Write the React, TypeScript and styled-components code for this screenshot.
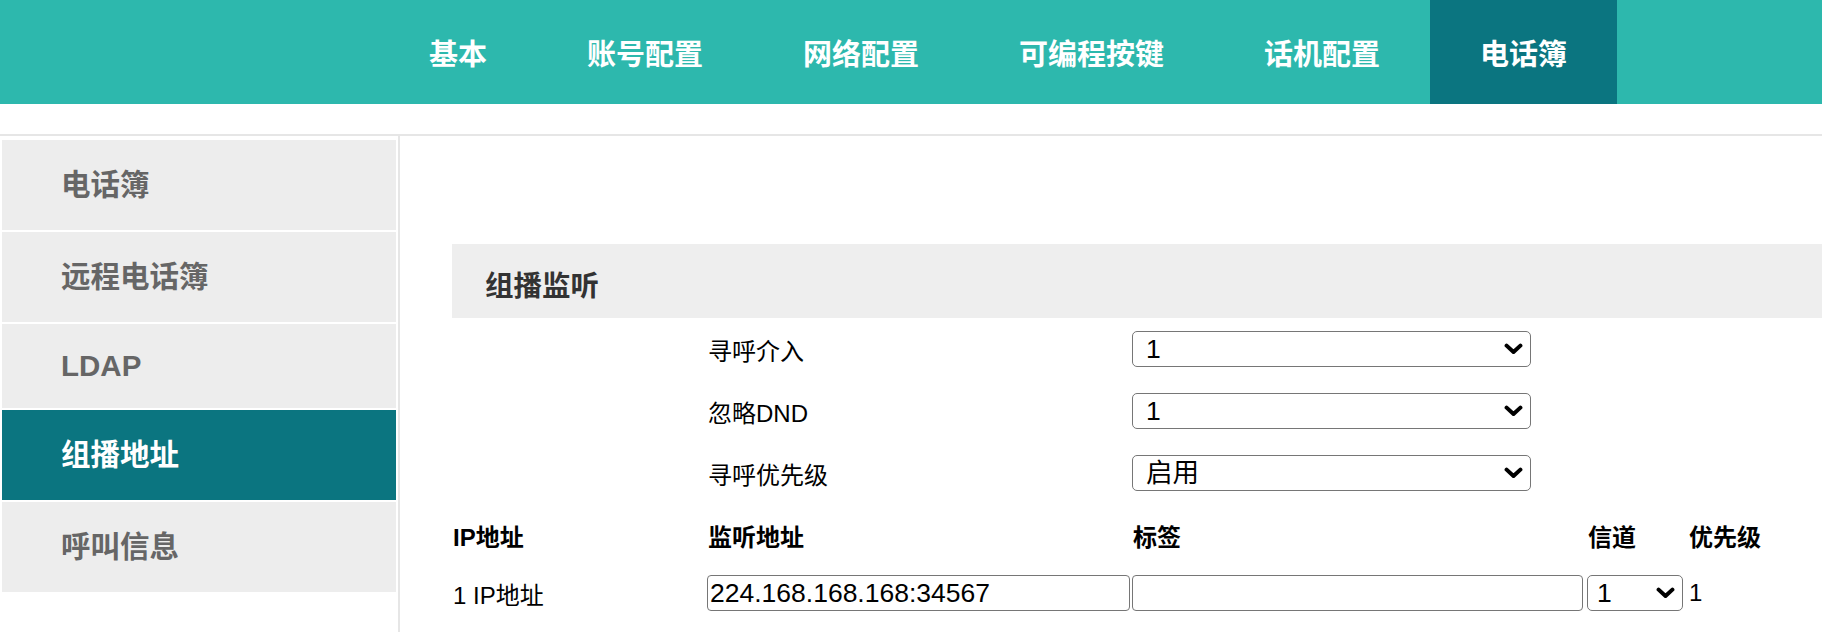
import React from "react";
import styled, { createGlobalStyle } from "styled-components";

const GlobalStyle = createGlobalStyle`
  html, body {
    margin: 0;
    padding: 0;
    background: #ffffff;
  }
  body {
    font-family: "Liberation Sans", "Noto Sans CJK SC", sans-serif;
    color: #000;
  }
  * { box-sizing: border-box; }
`;

const Page = styled.div`
  display: flex;
  flex-direction: column;
  min-height: 632px;
`;

const TopBar = styled.header`
  height: 104px;
  background: #2db8ad;
  display: flex;
  padding-left: 379px;
`;

const NavItem = styled.div<{ $active?: boolean }>`
  display: flex;
  align-items: center;
  padding: 0 50px;
  height: 100%;
  color: #ffffff;
  font-size: 29px;
  font-weight: 700;
  background: ${(p) => (p.$active ? "#0b7580" : "transparent")};
  white-space: nowrap;
`;

const Main = styled.div`
  margin-top: 30px;
  border-top: 2px solid #e6e6e6;
  display: grid;
  grid-template-columns: 400px 1fr;
  flex: 1;
`;

const Sidebar = styled.nav`
  border-right: 2px solid #e6e6e6;
  padding: 4px 2px;
  display: flex;
  flex-direction: column;
  gap: 2px;
`;

const SideItem = styled.div<{ $active?: boolean; $latin?: boolean }>`
  background: ${(p) => (p.$active ? "#0b7580" : "#ededed")};
  color: ${(p) => (p.$active ? "#ffffff" : "#666666")};
  font-size: 29.5px;
  font-weight: 700;
  line-height: ${(p) => (p.$latin ? "34px" : "40px")};
  padding: 25px 0 25px 59px;
`;

const Content = styled.section`
  padding: 108px 0 0 52px;
`;

const SectionTitle = styled.h2`
  margin: 0;
  height: 74px;
  background: #eeeeee;
  display: flex;
  align-items: center;
  padding: 4px 0 0 33px;
  font-size: 28.5px;
  font-weight: 700;
  color: #333333;
`;

const SettingRow = styled.div`
  display: grid;
  grid-template-columns: 256px 424px 399px;
  height: 62px;
  align-items: center;
`;

const Label = styled.div`
  font-size: 24px;
  color: #000;
`;

const TableRow = styled.div<{ $height: number }>`
  display: grid;
  grid-template-columns: 255px 425px 455px 101px 1fr;
  height: ${(p) => p.$height}px;
  align-items: center;
`;

const HeadCell = styled.div`
  font-size: 24px;
  font-weight: 700;
  padding-left: 1px;
`;

const Cell = styled.div`
  font-size: 24px;
  padding-left: 1px;
`;

const SelectWrap = styled.div<{ $width: number }>`
  position: relative;
  width: ${(p) => p.$width}px;
  height: 36px;
`;

const NativeSelect = styled.select<{ $pad: number }>`
  appearance: none;
  -webkit-appearance: none;
  width: 100%;
  height: 100%;
  border: 1.8px solid #767676;
  border-radius: 5px;
  background: #ffffff;
  font-family: "Liberation Sans", "Noto Sans CJK SC", sans-serif;
  font-size: 26.5px;
  color: #000;
  padding: 0 0 0 ${(p) => p.$pad}px;
  margin: 0;
  outline: none;
`;

const Chevron = styled.svg`
  position: absolute;
  right: 8px;
  top: 12px;
  pointer-events: none;
`;

const TextInput = styled.input<{ $width: number }>`
  width: ${(p) => p.$width}px;
  height: 36px;
  border: 1.8px solid #767676;
  border-radius: 4px;
  font-family: "Liberation Sans", "Noto Sans CJK SC", sans-serif;
  font-size: 26.5px;
  color: #000;
  padding: 0 0 0 2px;
  margin: 0;
  outline: none;
`;

function Select({ value, width, pad = 13 }: { value: string; width: number; pad?: number }) {
  return (
    <SelectWrap $width={width}>
      <NativeSelect $pad={pad} defaultValue={value}>
        <option value={value}>{value}</option>
      </NativeSelect>
      <Chevron width="19" height="12" viewBox="0 0 19 12">
        <path d="M2.6 2.6 L9.5 9 L16.4 2.6" fill="none" stroke="#000" strokeWidth="4" strokeLinecap="round" strokeLinejoin="round" />
      </Chevron>
    </SelectWrap>
  );
}

const navItems = ["基本", "账号配置", "网络配置", "可编程按键", "话机配置", "电话簿"];
const sideItems = [
  { t: "电话簿" },
  { t: "远程电话簿" },
  { t: "LDAP", latin: true },
  { t: "组播地址", active: true },
  { t: "呼叫信息" },
];
const settings = [
  { label: "寻呼介入", value: "1" },
  { label: "忽略DND", value: "1" },
  { label: "寻呼优先级", value: "启用" },
];

export default function App() {
  return (
    <>
      <GlobalStyle />
      <Page>
        <TopBar>
          {navItems.map((n) => (
            <NavItem key={n} $active={n === "电话簿"}>
              {n}
            </NavItem>
          ))}
        </TopBar>
        <Main>
          <Sidebar>
            {sideItems.map((s) => (
              <SideItem key={s.t} $active={s.active} $latin={s.latin}>
                {s.t}
              </SideItem>
            ))}
          </Sidebar>
          <Content>
            <SectionTitle>组播监听</SectionTitle>
            {settings.map((s) => (
              <SettingRow key={s.label}>
                <div />
                <Label>{s.label}</Label>
                <Select value={s.value} width={399} />
              </SettingRow>
            ))}
            <TableRow $height={62}>
              <HeadCell>IP地址</HeadCell>
              <HeadCell>监听地址</HeadCell>
              <HeadCell>标签</HeadCell>
              <HeadCell>信道</HeadCell>
              <HeadCell>优先级</HeadCell>
            </TableRow>
            <TableRow $height={54}>
              <Cell>1 IP地址</Cell>
              <div>
                <TextInput $width={423} defaultValue="224.168.168.168:34567" />
              </div>
              <div>
                <TextInput $width={451} defaultValue="" />
              </div>
              <div>
                <Select value="1" width={96} pad={9} />
              </div>
              <Cell>1</Cell>
            </TableRow>
          </Content>
        </Main>
      </Page>
    </>
  );
}
